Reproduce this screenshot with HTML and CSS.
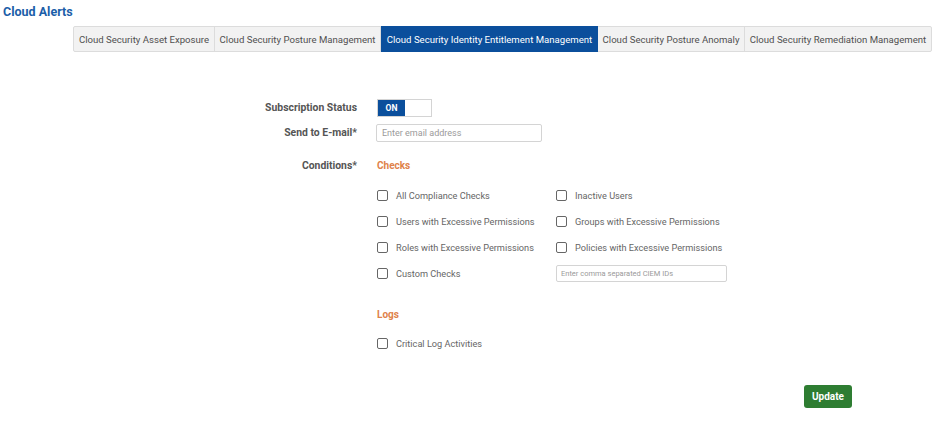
FILE: index.html
```html
<!DOCTYPE html>
<html>
<head>
    <title>Cloud Alerts</title>
    <meta name="viewport" content="width=device-width, initial-scale=1.0">
    <link rel="stylesheet" href="styles.css">
</head>
<body>
    <h1 class="page-title">Cloud Alerts</h1>

    <div class="tabs">
        <div class="tab">Cloud Security Asset Exposure</div>
        <div class="tab">Cloud Security Posture Management</div>
        <div class="tab active">Cloud Security Identity Entitlement Management</div>
        <div class="tab">Cloud Security Posture Anomaly</div>
        <div class="tab">Cloud Security Remediation Management</div>
    </div>

    <form class="alert-form">
        <div class="row status-row">
            <label class="field-label">Subscription Status</label>
            <div class="toggle">
                <span class="toggle-on">ON</span>
                <span class="toggle-off"></span>
            </div>
        </div>

        <div class="row email-row">
            <label class="field-label" for="email">Send to E-mail*</label>
            <input type="text" id="email" class="email-input" placeholder="Enter email address">
        </div>

        <div class="row conditions-row">
            <label class="field-label">Conditions*</label>
            <div class="conditions">
                <div class="section-title">Checks</div>
                <div class="checks">
                    <label class="check"><span class="box"></span>All Compliance Checks</label>
                    <label class="check"><span class="box"></span>Inactive Users</label>
                    <label class="check"><span class="box"></span>Users with Excessive Permissions</label>
                    <label class="check"><span class="box"></span>Groups with Excessive Permissions</label>
                    <label class="check"><span class="box"></span>Roles with Excessive Permissions</label>
                    <label class="check"><span class="box"></span>Policies with Excessive Permissions</label>
                    <label class="check"><span class="box"></span>Custom Checks</label>
                    <div class="check"><input type="text" class="ciem-input" placeholder="Enter comma separated CIEM IDs"></div>
                </div>

                <div class="section-title logs-title">Logs</div>
                <div class="checks">
                    <label class="check"><span class="box"></span>Critical Log Activities</label>
                </div>
            </div>
        </div>

        <div class="actions">
            <button type="button" class="update">Update</button>
        </div>
    </form>
</body>
</html>
```

FILE: styles.css
```css
body{
  margin: 0;
  font-family: Roboto, "Liberation Sans", Arial, sans-serif;
  color: #555;
  background: #fff;
}
.page-title{
  font-size: 12.5px;
  font-weight: bold;
  color: #1b5ea8;
  margin: 0;
  padding: 4px 3px 0;
  height: 22px;
}
.tabs{
  display: flex;
  margin-left: 73px;
  width: 859px;
  height: 26px;
  border: 1px solid #dcdcdc;
  border-radius: 2px;
  background: #f2f2f2;
  box-sizing: border-box;
}
.tab{
  flex: none;
  box-sizing: border-box;
  display: flex;
  align-items: center;
  justify-content: center;
  white-space: nowrap;
  font-size: 9.6px;
  color: #505050;
  border-right: 1px solid #dcdcdc;
}
.tab:nth-child(1){ width: 141px; }
.tab:nth-child(2){ width: 166px; }
.tab:nth-child(3){ width: 217px; }
.tab:nth-child(4){ width: 147px; }
.tab:last-child{ border-right: none; flex: 1; }
.tab.active{
  background: #0b4f9c;
  color: #fff;
  margin: -1px 0;
  border-right: none;
}

.alert-form{
  padding-top: 47px;
}
.row{
  display: grid;
  grid-template-columns: 357px auto;
  column-gap: 20px;
  align-items: start;
}
.field-label{
  text-align: right;
  font-size: 10.4px;
  font-weight: bold;
  color: #555;
  line-height: 18px;
}
.toggle{
  display: flex;
  width: 55px;
  height: 18px;
  border: 1px solid #d4d4d4;
  box-sizing: border-box;
}
.toggle-on{
  width: 27px;
  background: #0b4f9c;
  color: #fff;
  font-size: 8.5px;
  font-weight: bold;
  display: flex;
  align-items: center;
  justify-content: center;
}
.email-row{
  margin-top: 7px;
}
.email-input{
  width: 166px;
  height: 18px;
  border: 1px solid #d4d4d4;
  border-radius: 2px;
  box-sizing: border-box;
  padding: 0 5px;
  font-family: inherit;
  font-size: 9px;
  margin-left: -1px;
}
.email-input::placeholder, .ciem-input::placeholder{
  color: #9a9a9a;
}
.conditions-row{
  margin-top: 15px;
}
.section-title{
  color: #e0824a;
  font-size: 10px;
  font-weight: bold;
  line-height: 18px;
}
.checks{
  display: grid;
  grid-template-columns: 179px auto;
  grid-auto-rows: 26px;
  margin-top: 7px;
}
.check{
  display: flex;
  align-items: center;
  font-size: 9.2px;
  color: #666;
}
.box{
  width: 9px;
  height: 9px;
  border: 1px solid #666;
  border-radius: 2px;
  margin-right: 8px;
  flex: none;
}
.ciem-input{
  width: 171px;
  height: 17px;
  border: 1px solid #d4d4d4;
  border-radius: 2px;
  box-sizing: border-box;
  padding: 0 4px;
  font-family: inherit;
  font-size: 7.5px;
}
.logs-title{
  margin-top: 20px;
}
.logs-title + .checks{
  margin-top: 6px;
}
.actions{
  display: flex;
  justify-content: flex-end;
  padding-right: 88px;
  margin-top: 29px;
}
.update{
  background: #2e7d32;
  color: #fff;
  border: none;
  border-radius: 3px;
  padding: 0 8px;
  height: 23px;
  font-family: inherit;
  font-size: 10px;
  font-weight: bold;
}
```
